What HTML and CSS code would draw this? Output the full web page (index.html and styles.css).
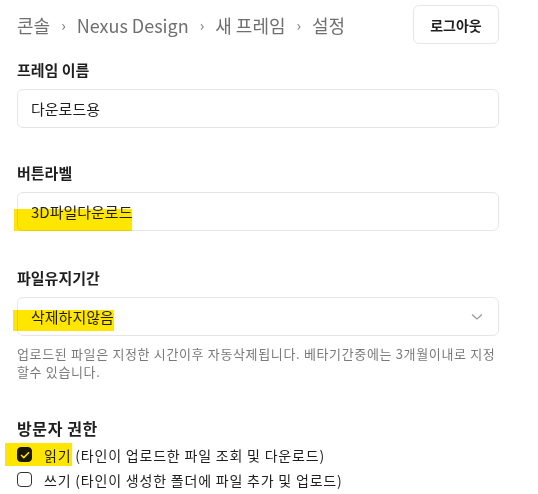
FILE: index.html
```html
<!DOCTYPE html>
<html>
<head>
  <title>설정 | Nexus Design</title>
  <link rel="stylesheet" href="styles.css">
</head>
<body>
  <div class="page">
    <header class="topbar">
      <nav class="crumbs">
        <span>콘솔</span>
        <span class="sep">›</span>
        <span>Nexus Design</span>
        <span class="sep">›</span>
        <span>새 프레임</span>
        <span class="sep">›</span>
        <span>설정</span>
      </nav>
      <button class="logout">로그아웃</button>
    </header>

    <div class="field">
      <label class="label">프레임 이름</label>
      <div class="box">다운로드용</div>
    </div>

    <div class="field">
      <label class="label">버튼라벨</label>
      <div class="box">
        <span class="mark mark-label"></span>
        3D파일다운로드
      </div>
    </div>

    <div class="field keep">
      <label class="label">파일유지기간</label>
      <div class="box select">
        <span class="mark mark-keep"></span>
        <span>삭제하지않음</span>
        <svg class="chevron" width="12" height="8" viewBox="0 0 12 8">
          <path d="M1 1.5 L6 6 L11 1.5" fill="none" stroke="#9a9a9a" stroke-width="1.3"/>
        </svg>
      </div>
      <p class="help">업로드된 파일은 지정한 시간이후 자동삭제됩니다. 베타기간중에는 3개월이내로 지정할수 있습니다.</p>
    </div>

    <div class="field perms">
      <div class="label big">방문자 권한</div>
      <div class="check-row">
        <span class="mark mark-read"></span>
        <span class="checkbox on">
          <svg width="10" height="8" viewBox="0 0 10 8">
            <path d="M1 4 L3.8 6.6 L9 1.2" fill="none" stroke="#fff" stroke-width="1.5"/>
          </svg>
        </span>
        <span>읽기 (타인이 업로드한 파일 조회 및 다운로드)</span>
      </div>
      <div class="check-row">
        <span class="checkbox"></span>
        <span>쓰기 (타인이 생성한 폴더에 파일 추가 및 업로드)</span>
      </div>
    </div>
  </div>
</body>
</html>
```

FILE: styles.css
```css
body {
  margin: 0;
  background: #fff;
  font-family: "Noto Sans CJK KR", "Noto Sans", sans-serif;
  color: #1f1f1f;
}

.page {
  width: 482px;
  padding: 5px 0 0 17px;
}

.topbar {
  display: flex;
  justify-content: space-between;
  align-items: center;
  height: 39px;
}

.crumbs {
  display: flex;
  align-items: center;
  gap: 11px;
  font-size: 18px;
  color: #6f6f6f;
}

.crumbs .sep {
  font-size: 15px;
  color: #777;
}

.logout {
  width: 86px;
  height: 39px;
  border: 1px solid #e6e6e6;
  border-radius: 6px;
  background: #fff;
  font-family: inherit;
  font-size: 14px;
  font-weight: bold;
  color: #1f1f1f;
}

.field {
  margin-top: 16px;
}

.field + .field {
  margin-top: 35px;
}

.field.keep {
  margin-top: 37px;
}

.label {
  display: block;
  font-size: 15px;
  font-weight: bold;
  line-height: 20px;
  margin-bottom: 9px;
}

.box {
  position: relative;
  height: 37px;
  border: 1px solid #e6e6e6;
  border-radius: 6px;
  padding: 0 13px;
  display: flex;
  align-items: center;
  font-size: 15px;
}

.select {
  justify-content: space-between;
}

.chevron {
  margin-right: 2px;
}

.help {
  margin: 9px 0 0;
  font-size: 13px;
  line-height: 18px;
  letter-spacing: 0.65px;
  color: #7a7a7a;
}

.field.perms {
  margin-top: 37px;
}

.label.big {
  font-size: 16px;
  letter-spacing: 0.6px;
  margin-bottom: 4px;
}

.check-row {
  position: relative;
  display: flex;
  align-items: center;
  gap: 12px;
  height: 25px;
  font-size: 14px;
  letter-spacing: 0.8px;
}

.checkbox {
  box-sizing: border-box;
  width: 15px;
  height: 15px;
  border: 1.5px solid #333;
  border-radius: 4px;
  display: flex;
  align-items: center;
  justify-content: center;
}

.checkbox.on {
  background: #1a1a1a;
  border-color: #1a1a1a;
}

/* yellow highlighter marks over the screenshot */
.mark {
  position: absolute;
  background: #ffe600;
  mix-blend-mode: multiply;
}

.mark-label {
  left: -4px;
  top: 16px;
  width: 118px;
  height: 22px;
}

.mark-keep {
  left: -5px;
  top: 12px;
  width: 101px;
  height: 21px;
}

.mark-read {
  left: -12px;
  top: 1px;
  width: 67px;
  height: 23px;
}
```
